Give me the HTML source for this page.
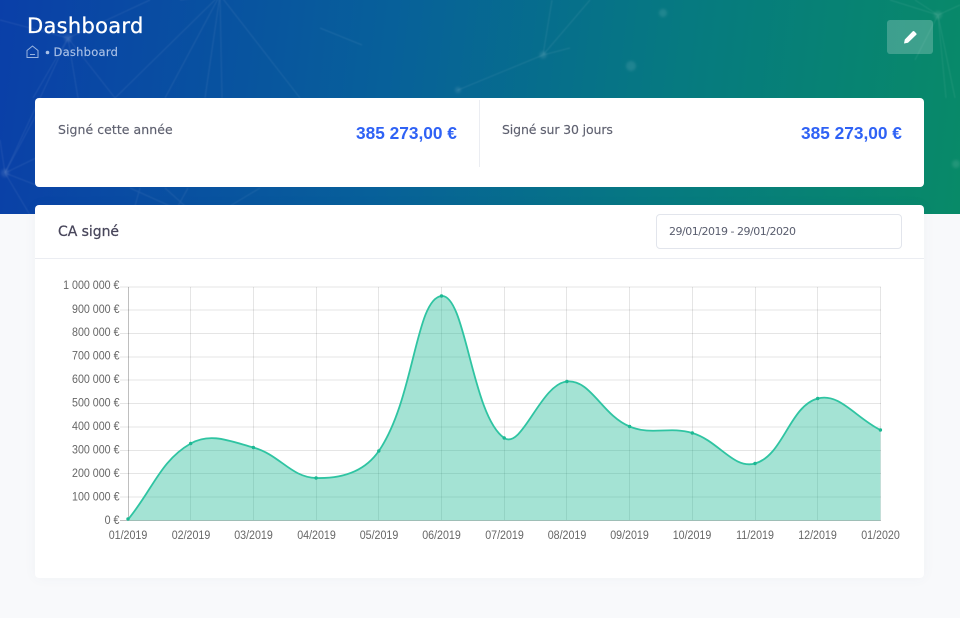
<!DOCTYPE html>
<html lang="fr">
<head>
<meta charset="utf-8">
<title>Dashboard</title>
<style>
html,body{margin:0;padding:0;width:960px;height:618px;overflow:hidden;background:#f8f9fb}
body{position:relative;font-family:"DejaVu Sans","Liberation Sans",sans-serif}
.hero{position:absolute;left:0;top:0;width:960px;height:214px;background:linear-gradient(97deg,#0a3fa8 0%,#07609a 40%,#067a80 70%,#088a68 100%);overflow:hidden}
.hero svg{position:absolute;left:0;top:0}
.t{position:absolute;white-space:nowrap;line-height:1}
.title{left:27px;top:16px;font-size:21px;color:#fff;-webkit-text-stroke:.3px #fff;letter-spacing:.3px}
.crumb{left:53.500px;top:47px;font-size:11.500px;color:#a9c0e6;-webkit-text-stroke:.15px #a9c0e6;letter-spacing:.25px}
.btn{position:absolute;left:887px;top:20px;width:46px;height:34px;background:rgba(255,255,255,.22);border-radius:3px}
.card{position:absolute;left:35px;width:889px;background:#fff;border-radius:4px}
.stat{top:98px;height:89px}
.chart{top:205px;height:373px;box-shadow:0 0 12px rgba(80,90,130,.05)}
.div{position:absolute;left:479px;top:100px;width:1px;height:67px;background:#ebedf2}
.lab{font-size:12.500px;color:#5f6170;-webkit-text-stroke:.15px #5f6170;top:124px;letter-spacing:.05px}
.val{font-family:"Liberation Sans",sans-serif;font-size:17.300px;color:#2f62f5;font-weight:bold;top:124.500px}
.ca{left:58px;top:225px;font-size:14px;color:#48465b;-webkit-text-stroke:.25px #48465b;letter-spacing:-.05px}
.hr{position:absolute;left:35px;top:258px;width:889px;height:1px;background:#ebedf2}
.inp{position:absolute;left:656px;top:214px;width:244px;height:33px;border:1px solid #e2e5ec;border-radius:4px;background:#fff}
.date{left:669px;top:226px;font-size:11px;color:#595d6e;letter-spacing:-.49px}
svg text{font-family:"Liberation Sans",sans-serif;font-size:12px;fill:#666}
</style>
</head>
<body>
<div class="hero">
<svg width="960" height="214" viewBox="0 0 960 214" fill="none">
<defs>
<filter id="b" x="-100%" y="-100%" width="300%" height="300%"><feGaussianBlur stdDeviation="1.2"/></filter>
<filter id="l" x="-5%" y="-5%" width="110%" height="110%"><feGaussianBlur stdDeviation=".45"/></filter>
</defs>
<g stroke="#fff" stroke-opacity=".08" stroke-width="1" filter="url(#l)">
<path d="M68 38L115 98M68 38L78 98M68 38L33 98M68 38L5 173M68 38L0 20M68 38L150 0"/>
<path d="M220 -5L115 98M220 -5L165 98M220 -5L205 98M220 -5L222 98M220 -5L300 98M220 -5L180 0"/>
<path d="M5 173L36 115M5 173L36 158M5 173L36 185M5 173L30 215M5 173L0 140"/>
<path d="M130 188L170 206M135 206L140 188M165 188L185 206M188 188L178 206M230 206L260 188"/>
<path d="M320 28L362 45M458 90L543 55M543 55L552 0M543 55L590 0M543 55L570 48"/>
<path d="M938 15L890 0M938 15L960 5M938 15L915 0M938 15L946 98M938 15L955 98M938 15L915 60"/>
</g>
<g fill="#fff" fill-opacity=".1" filter="url(#b)">
<circle cx="68" cy="38" r="4"/><circle cx="5" cy="173" r="4"/><circle cx="543" cy="55" r="3.500"/><circle cx="458" cy="90" r="3"/><circle cx="938" cy="15" r="4"/><circle cx="631" cy="66" r="5"/><circle cx="663" cy="13" r="4"/><circle cx="956" cy="164" r="4"/>
</g>
<g fill="none" stroke="#a9c0e6" stroke-width="1" stroke-opacity=".9">
<path d="M27 50.500L32.500 46L38 50.500V57.500H27Z"/><path d="M30 54.500H35"/>
</g>
<circle cx="47.500" cy="52.500" r="1.800" fill="#a9c0e6"/>
</svg>
</div>
<div class="t title">Dashboard</div>
<div class="t crumb">Dashboard</div>
<div class="btn">
<svg width="46" height="34" viewBox="0 0 46 34"><path d="M17 23.500L17.800 19.500L25.800 11.300a1 1 0 0 1 1.400 0L29.300 13.400a1 1 0 0 1 0 1.400L21 22.700Z" fill="#fff"/></svg>
</div>

<div class="card stat"></div>
<div class="div"></div>
<div class="t lab" style="left:58px">Signé cette année</div>
<div class="t val" style="left:356px">385 273,00 €</div>
<div class="t lab" style="left:502px;letter-spacing:-.13px">Signé sur 30 jours</div>
<div class="t val" style="left:801px">385 273,00 €</div>

<div class="card chart"></div>
<div class="t ca">CA signé</div>
<div class="inp"></div>
<div class="t date">29/01/2019 - 29/01/2020</div>
<div class="hr"></div>

<svg width="960" height="618" viewBox="0 0 960 618" style="position:absolute;left:0;top:0">
<g stroke="#000" stroke-opacity=".1" stroke-width="1" fill="none">
<path d="M120 287H881M120 310H881M120 333.500H881M120 357H881M120 380H881M120 403.500H881M120 427H881M120 450.500H881M120 473.500H881M120 497H881"/>
<path d="M190.500 287V520M253.500 287V520M316.500 287V520M378.500 287V520M441.500 287V520M504.500 287V520M566.500 287V520M629.500 287V520M692.500 287V520M755.500 287V520M817.500 287V520M880.500 287V520"/>
</g>
<path d="M128.500 287V520.500M120 520.500H881" stroke="#000" stroke-opacity=".25" fill="none"/>
<path d="M128 519.500C153.100 489.100 160.100 461.100 190.700 443.500C210.300 432.300 229.600 440.900 253.400 447.500C279.700 454.700 290.800 477.300 316.100 478C340.900 478.700 364.300 472.100 378.800 451C414.400 399.300 415.500 298.700 441.500 296C465.700 293.500 471.700 415.900 504.200 438C521.900 450.100 540.700 383.900 566.900 381.500C590.900 379.300 602 415.200 629.600 426.500C652.200 435.800 668.500 426 692.300 433C718.600 440.800 733.200 469.500 755 463.500C783.300 455.700 789.500 406 817.700 398.500C839.600 392.600 855.300 417.400 880.400 430V520.500H128Z" fill="rgba(27,185,147,.4)"/>
<path d="M128 519.500C153.100 489.100 160.100 461.100 190.700 443.500C210.300 432.300 229.600 440.900 253.400 447.500C279.700 454.700 290.800 477.300 316.100 478C340.900 478.700 364.300 472.100 378.800 451C414.400 399.300 415.500 298.700 441.500 296C465.700 293.500 471.700 415.900 504.200 438C521.900 450.100 540.700 383.900 566.900 381.500C590.900 379.300 602 415.200 629.600 426.500C652.200 435.800 668.500 426 692.300 433C718.600 440.800 733.200 469.500 755 463.500C783.300 455.700 789.500 406 817.700 398.500C839.600 392.600 855.300 417.400 880.400 430" fill="none" stroke="#2fc4a2" stroke-width="1.800"/>
<g fill="#1cb893">
<circle cx="128" cy="519" r="1.700"/><circle cx="190.700" cy="443.500" r="1.700"/><circle cx="253.400" cy="447.500" r="1.700"/><circle cx="316.100" cy="478" r="1.700"/><circle cx="378.800" cy="451" r="1.700"/><circle cx="441.500" cy="296" r="1.700"/><circle cx="504.200" cy="438" r="1.700"/><circle cx="566.900" cy="381.500" r="1.700"/><circle cx="629.600" cy="426.500" r="1.700"/><circle cx="692.300" cy="433" r="1.700"/><circle cx="755" cy="463.500" r="1.700"/><circle cx="817.700" cy="398.500" r="1.700"/><circle cx="880.400" cy="430" r="1.700"/>
</g>
<g text-anchor="end" transform="translate(119.500 0) scale(.89 1)">
<text x="0" y="289">1 000 000 €</text>
<text x="0" y="313">900 000 €</text>
<text x="0" y="336">800 000 €</text>
<text x="0" y="359.500">700 000 €</text>
<text x="0" y="383">600 000 €</text>
<text x="0" y="406.500">500 000 €</text>
<text x="0" y="430">400 000 €</text>
<text x="0" y="453.500">300 000 €</text>
<text x="0" y="477">200 000 €</text>
<text x="0" y="500.500">100 000 €</text>
<text x="0" y="524">0 €</text>
</g>
<g text-anchor="middle">
<text transform="translate(128 539) scale(.89 1)">01/2019</text>
<text transform="translate(191 539) scale(.89 1)">02/2019</text>
<text transform="translate(253.500 539) scale(.89 1)">03/2019</text>
<text transform="translate(316.500 539) scale(.89 1)">04/2019</text>
<text transform="translate(379 539) scale(.89 1)">05/2019</text>
<text transform="translate(441.500 539) scale(.89 1)">06/2019</text>
<text transform="translate(504.500 539) scale(.89 1)">07/2019</text>
<text transform="translate(567 539) scale(.89 1)">08/2019</text>
<text transform="translate(629.500 539) scale(.89 1)">09/2019</text>
<text transform="translate(692 539) scale(.89 1)">10/2019</text>
<text transform="translate(755 539) scale(.89 1)">11/2019</text>
<text transform="translate(817.500 539) scale(.89 1)">12/2019</text>
<text transform="translate(880.500 539) scale(.89 1)">01/2020</text>
</g>
</svg>
</body>
</html>
